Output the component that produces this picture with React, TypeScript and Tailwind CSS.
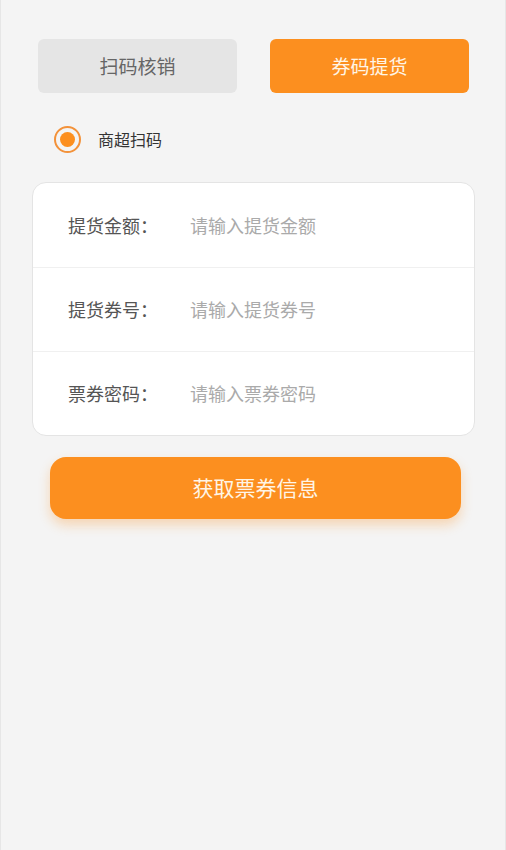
import { useState } from 'react'

const fields = [
  { label: '提货金额', placeholder: '请输入提货金额' },
  { label: '提货券号', placeholder: '请输入提货券号' },
  { label: '票券密码', placeholder: '请输入票券密码' },
]

const App = () => {
  const [tab, setTab] = useState(1)

  return (
    <div
      className="min-h-[850px] bg-[#f4f4f4] border-x border-[#e6e6e6] flex flex-col"
      style={{ fontFamily: '"Noto Sans CJK SC", "Noto Sans", sans-serif' }}
    >
      <div className="flex gap-[33px] pl-[37px] pr-[36px] pt-[39px]">
        <button
          onClick={() => setTab(0)}
          className={`flex-1 h-[54px] rounded-md text-[19px] ${
            tab === 0 ? 'bg-[#fc8f1f] text-[#fff5e6]' : 'bg-[#e5e5e5] text-[#666]'
          }`}
        >
          扫码核销
        </button>
        <button
          onClick={() => setTab(1)}
          className={`flex-1 h-[54px] rounded-md text-[19px] ${
            tab === 1 ? 'bg-[#fc8f1f] text-[#fff5e6]' : 'bg-[#e5e5e5] text-[#666]'
          }`}
        >
          券码提货
        </button>
      </div>

      <div className="flex items-center pl-[53px] mt-[32px] h-[28px]">
        <span className="w-[27px] h-[27px] rounded-full border-2 border-[#f3923a] flex items-center justify-center">
          <span className="w-[15px] h-[15px] rounded-full bg-[#fc8f1f]" />
        </span>
        <span className="ml-[17px] text-[16px] text-[#333]">商超扫码</span>
      </div>

      <div className="ml-[31px] mr-[30px] mt-[29px] bg-white rounded-[14px] border border-[#e4e4e4] flex flex-col">
        {fields.map((f, i) => (
          <div
            key={f.label}
            className={`h-[84px] flex items-center pl-[35px] ${
              i > 0 ? 'border-t border-[#f0f0f0]' : ''
            }`}
          >
            <span className="w-[122px] text-[18px] text-[#555]">{f.label}：</span>
            <input
              placeholder={f.placeholder}
              className="flex-1 text-[18px] text-[#333] placeholder:text-[#aaa] outline-none bg-transparent"
            />
          </div>
        ))}
      </div>

      <button className="ml-[49px] mr-[44px] mt-[21px] h-[62px] rounded-[16px] bg-[#fc8f1f] text-[#fff5e6] text-[21px] shadow-[0_6px_12px_rgba(252,143,31,0.3)]">
        获取票券信息
      </button>
    </div>
  )
}

export default App
